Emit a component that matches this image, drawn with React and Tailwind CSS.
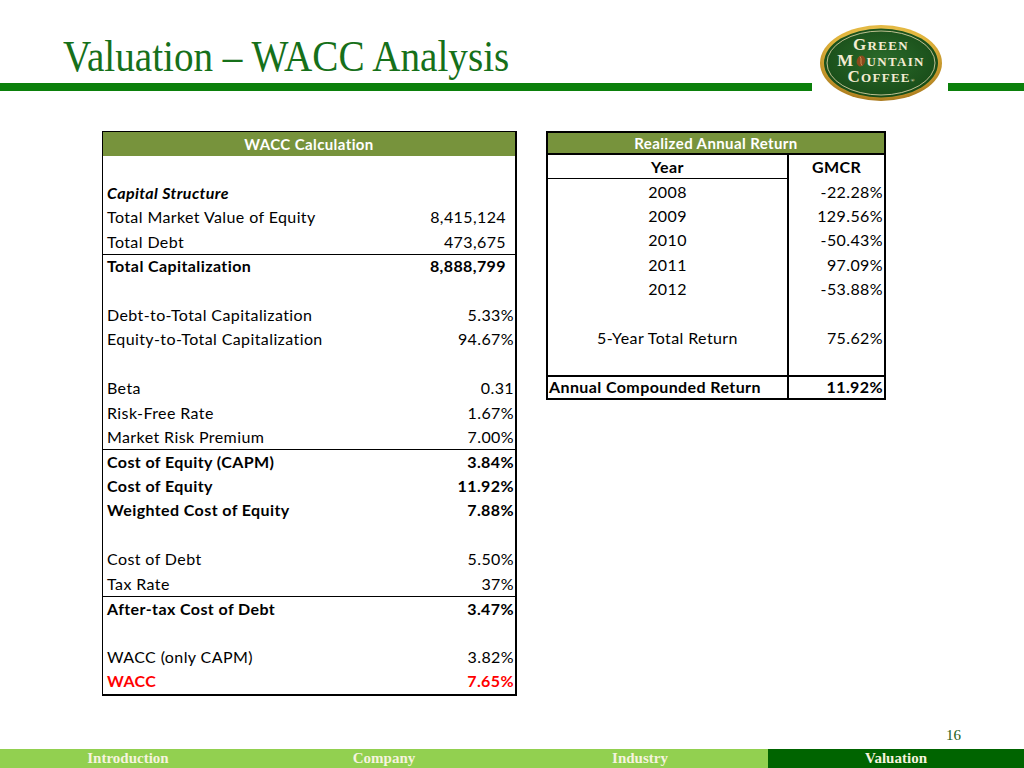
import React from "react";

const leftRows = [
  {},
  { label: "Capital Structure", italic: true },
  { label: "Total Market Value of Equity", value: "8,415,124", num: true },
  { label: "Total Debt", value: "473,675", num: true },
  { label: "Total Capitalization", value: "8,888,799", num: true, bold: true, line: true },
  {},
  { label: "Debt-to-Total Capitalization", value: "5.33%" },
  { label: "Equity-to-Total Capitalization", value: "94.67%" },
  {},
  { label: "Beta", value: "0.31" },
  { label: "Risk-Free Rate", value: "1.67%" },
  { label: "Market Risk Premium", value: "7.00%" },
  { label: "Cost of Equity (CAPM)", value: "3.84%", bold: true, line: true },
  { label: "Cost of Equity", value: "11.92%", bold: true },
  { label: "Weighted Cost of Equity", value: "7.88%", bold: true },
  {},
  { label: "Cost of Debt", value: "5.50%" },
  { label: "Tax Rate", value: "37%" },
  { label: "After-tax Cost of Debt", value: "3.47%", bold: true, line: true },
  {},
  { label: "WACC (only CAPM)", value: "3.82%" },
  { label: "WACC", value: "7.65%", bold: true, red: true },
];

const years = [
  ["2008", "-22.28%"],
  ["2009", "129.56%"],
  ["2010", "-50.43%"],
  ["2011", "97.09%"],
  ["2012", "-53.88%"],
];

function Logo() {
  return (
    <div className="absolute left-[819px] top-[24px] w-[124px] h-[78px]">
      <svg width="124" height="78" viewBox="0 0 124 78" className="absolute inset-0">
        <defs>
          <radialGradient id="gold" cx="50%" cy="40%" r="60%">
            <stop offset="0%" stopColor="#fbe89a" />
            <stop offset="70%" stopColor="#e2b53c" />
            <stop offset="100%" stopColor="#a8781c" />
          </radialGradient>
          <radialGradient id="felt" cx="50%" cy="45%" r="60%">
            <stop offset="0%" stopColor="#2a6a2a" />
            <stop offset="100%" stopColor="#174a17" />
          </radialGradient>
        </defs>
        <ellipse cx="62" cy="39" rx="61" ry="38" fill="url(#gold)" />
        <ellipse cx="62" cy="39" rx="57" ry="34.5" fill="url(#felt)" />
        <ellipse cx="62" cy="39" rx="54" ry="32" fill="none" stroke="#e8dcae" strokeWidth="0.8" />
      </svg>
      <div className="absolute inset-0 flex flex-col items-center pt-[13px] text-[#f4ecd2] font-bold leading-[15px] tracking-[1.3px] [font-family:'Liberation_Serif',serif]">
        <div className="flex items-baseline">
          <span className="text-[17px]">G</span>
          <span className="text-[13px]">REEN</span>
        </div>
        <div className="flex items-baseline">
          <span className="text-[17px]">M</span>
          <svg width="10" height="12" viewBox="0 0 10 12" className="mx-[1px] self-center">
            <ellipse cx="5" cy="6" rx="4.2" ry="5.6" fill="#8a4a1c" transform="rotate(18 5 6)" />
            <path d="M4 1.5 C6.5 4 3.5 8 6 10.5" stroke="#d99a5a" strokeWidth="0.9" fill="none" />
          </svg>
          <span className="text-[13px]">UNTAIN</span>
        </div>
        <div className="flex items-baseline">
          <span className="text-[17px]">C</span>
          <span className="text-[13px]">OFFEE</span>
          <span className="text-[5px] tracking-normal">®</span>
        </div>
      </div>
    </div>
  );
}

function LeftTable() {
  return (
    <div className="w-[415px] border-l border-t border-r-2 border-b-2 border-black">
      <div className="h-[24px] bg-[#77933c] text-white font-bold text-[15px] flex items-center justify-center">
        WACC Calculation
      </div>
      {leftRows.map((r, i) => (
        <div
          key={i}
          className={
            "h-[24.45px] flex items-center justify-between pl-[4px] " +
            (r.num ? "pr-[9px] " : "pr-[1px] ") +
            (r.line ? "border-t border-black " : "") +
            (r.bold || r.italic ? "font-bold " : "") +
            (r.italic ? "italic " : "") +
            (r.red ? "text-[#ff0000]" : "text-black")
          }
        >
          <span>{r.label}</span>
          <span>{r.value}</span>
        </div>
      ))}
    </div>
  );
}

function RightTable() {
  return (
    <div className="w-[340px] border-2 border-black">
      <div className="h-[22px] bg-[#77933c] text-white font-bold text-[15px] flex items-center justify-center border-b-2 border-black">
        Realized Annual Return
      </div>
      <div className="flex">
        <div className="w-[241px] border-r-2 border-black">
          <div className="h-[24.4px] flex items-center justify-center font-bold border-b border-black">Year</div>
          {years.map(([y]) => (
            <div key={y} className="h-[24.4px] flex items-center justify-center">{y}</div>
          ))}
          <div className="h-[24.4px]" />
          <div className="h-[24.4px] flex items-center justify-center">5-Year Total Return</div>
          <div className="h-[24.4px]" />
          <div className="h-[23px] flex items-center pl-[1px] font-bold border-t-2 border-black">
            Annual Compounded Return
          </div>
        </div>
        <div className="flex-1">
          <div className="h-[24.4px] flex items-center justify-center font-bold">GMCR</div>
          {years.map(([y, v]) => (
            <div key={y} className="h-[24.4px] flex items-center justify-end pr-[1px]">{v}</div>
          ))}
          <div className="h-[24.4px]" />
          <div className="h-[24.4px] flex items-center justify-end pr-[1px]">75.62%</div>
          <div className="h-[24.4px]" />
          <div className="h-[23px] flex items-center justify-end pr-[1px] font-bold border-t-2 border-black">
            11.92%
          </div>
        </div>
      </div>
    </div>
  );
}

export default function App() {
  return (
    <div className="relative w-[1024px] h-[768px] bg-white overflow-hidden flex flex-col [font-family:Lato,'Open_Sans',sans-serif] text-[16px] tracking-[0.4px]">
      <div className="h-[83px] pl-[63px] pt-[34px] tracking-normal">
        <h1 className="origin-left scale-x-[0.87] whitespace-nowrap text-[45px] leading-[45px] text-[#16701a] [font-family:'Liberation_Serif',serif]">
          Valuation – WACC Analysis
        </h1>
      </div>
      <div className="flex h-[8px]">
        <div className="w-[812px] bg-[#0b800b]" />
        <div className="ml-auto w-[76px] bg-[#0b800b]" />
      </div>

      <div className="flex items-start pl-[102px] pt-[40px]">
        <LeftTable />
        <div className="ml-[29px]">
          <RightTable />
        </div>
      </div>

      <div className="mt-auto tracking-normal">
        <div className="flex justify-end pr-[63px] pb-[3px] text-[15px] text-[#1c5e1c] [font-family:'Liberation_Serif',serif]">
          16
        </div>
        <div className="grid grid-cols-4 h-[19px] bg-[#92d050] text-[#f6f3df] font-bold text-[15px] leading-[19px] [font-family:'Liberation_Serif',serif]">
          <div className="text-center">Introduction</div>
          <div className="text-center">Company</div>
          <div className="text-center">Industry</div>
          <div className="text-center bg-[#006400]">Valuation</div>
        </div>
      </div>

      <Logo />
    </div>
  );
}
